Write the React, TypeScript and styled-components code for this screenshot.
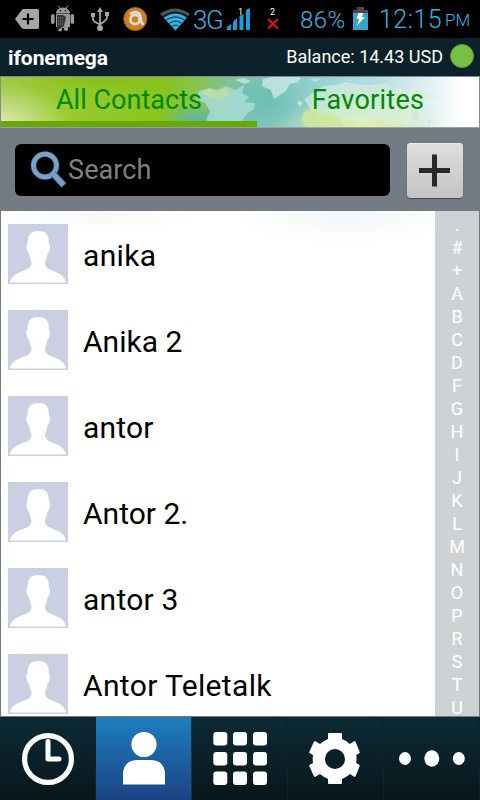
import React from "react";
import styled, { createGlobalStyle } from "styled-components";

const GlobalStyle = createGlobalStyle`
  * { box-sizing: border-box; }
  body { margin: 0; background: #000; }
`;

const Screen = styled.main`
  width: 480px;
  height: 800px;
  display: flex;
  flex-direction: column;
  overflow: hidden;
  font-family: Roboto, "Liberation Sans", sans-serif;
  background: #0b1f27;
`;

const StatusBar = styled.header`
  height: 38px;
  flex: none;
  display: flex;
  background: #000;
  color: #38b2e2;
`;

const Slot = styled.div<{ $gap: number; $w: number }>`
  flex: none;
  margin-left: ${(p) => p.$gap}px;
  width: ${(p) => p.$w}px;
  height: 38px;
  svg { display: block; }
`;

const StatusText = styled.span<{ $size: number; $track?: number }>`
  display: block;
  font-size: ${(p) => p.$size}px;
  letter-spacing: ${(p) => p.$track ?? 0}px;
  line-height: 40px;
  white-space: nowrap;
  font-weight: 300;
`;

const TitleBar = styled.div`
  height: 38px;
  flex: none;
  display: flex;
  align-items: center;
  justify-content: space-between;
  padding: 0 6px 2px 8px;
  background: #0c2129;
  color: #fff;
`;

const Account = styled.strong`
  font-size: 21px;
  letter-spacing: -0.1px;
  font-weight: 700;
  padding-top: 3px;
`;

const Balance = styled.div`
  display: flex;
  align-items: center;
  gap: 7px;
  font-size: 18px;
  letter-spacing: 0;
  white-space: nowrap;
`;

const Online = styled.i`
  width: 24px;
  height: 24px;
  border-radius: 50%;
  background: #76c043;
  border: 1px solid #5a9b38;
`;

const Tabs = styled.nav`
  height: 52px;
  flex: none;
  position: relative;
  display: flex;
  overflow: hidden;
  border: 1px solid #858b8c;
  border-bottom-color: #9aa09c;
`;

const TabArt = styled.svg`
  position: absolute;
  inset: 0;
`;

const Tab = styled.div<{ $active?: boolean }>`
  position: relative;
  width: ${(p) => (p.$active ? 256 : 222)}px;
  height: 50px;
  border-bottom: ${(p) => (p.$active ? "6px solid #66a900" : "0")};
  text-align: center;
  font-size: 27px;
  line-height: 46px;
  letter-spacing: ${(p) => (p.$active ? 0.03 : 0.25)}px;
  color: #008a00;
  white-space: nowrap;
`;

const SearchRow = styled.div`
  height: 83px;
  flex: none;
  display: flex;
  align-items: center;
  gap: 17px;
  padding: 1px 16px 0 15px;
  background: #737c84;
`;

const SearchBox = styled.label`
  width: 375px;
  height: 52px;
  display: flex;
  align-items: center;
  border-radius: 6px;
  padding-left: 14px;
  background: #000;
  color: #808080;
  font-size: 27px;
  letter-spacing: 0.1px;
  line-height: 54px;
`;

const AddButton = styled.button`
  width: 56px;
  height: 55px;
  padding: 0;
  border: 0;
  border-radius: 4px;
  background: linear-gradient(#dedede, #c5c4c5);
  box-shadow: 0 1px 1px #45494c, inset 0 1px #e9e9e9;
  svg { display: block; }
`;

const Body = styled.section`
  height: 506px;
  flex: none;
  display: flex;
  overflow: hidden;
  border: solid #74797b;
  border-width: 0 1px 1px;
  background:
    radial-gradient(ellipse 120px 34px at 345px 0, #f2f6f6, transparent),
    radial-gradient(ellipse 100px 24px at 100px 0, #f7f7f7, transparent), #fff;
`;

const ContactList = styled.ul`
  list-style: none;
  margin: 0;
  padding: 13px 0 0 7px;
  width: 434px;
`;

const Contact = styled.li`
  height: 86px;
  display: flex;
  align-items: flex-start;
  gap: 15px;
  font-size: 30px;
  line-height: 63px;
  color: #000;
  svg { display: block; flex: none; }
`;

const ContactName = styled.span<{ $track: number }>`
  letter-spacing: ${(p) => p.$track}px;
`;

const AlphaIndex = styled.div`
  width: 44px;
  background: #cfd2d4;
  padding-top: 2px;
  color: #fff;
  font-size: 18px;
  text-align: center;
`;

const Letter = styled.div`
  height: 23px;
  line-height: 23px;
`;

const BottomNav = styled.nav`
  height: 83px;
  flex: none;
  display: grid;
  grid-template-columns: repeat(5, 96px);
`;

const NavItem = styled.button<{ $active?: boolean }>`
  height: 83px;
  padding: 0;
  border: 0;
  border-right: 1px solid ${(p) => (p.$active ? "#123451" : "#0d242d")};
  background: ${(p) => (p.$active ? "linear-gradient(#1d7bbd 5%, #1b4384)" : "linear-gradient(#0d2a34, #09161c)")};
  svg { display: block; }
`;

const Avatar = () => (
  <svg width="60" height="60" viewBox="0 0 60 60">
    <path fill="#cad0e2" d="M0 0h60v60H0z" />
    <path fill="#fff" d="M30.300 7C22 7 19.500 11.500 19.500 20c-1.300 0-1.300 3-.7 5.500.5 2.500 1.400 3.500 2.400 4.500.4 4 1.300 6 2.300 8 .3 3-1 5-3 6.500C17 47.500 3.500 48.500 2 58.500h56C56.500 48.500 43.500 47.500 40 44.500c-2-1.500-3.300-3.500-3-6.500 1-2 1.900-4 2.300-8 1-1 1.900-2 2.400-4.500.6-2.500.6-5.500-.7-5.500C41 11.500 38.600 7 30.300 7z" />
  </svg>
);

const PlusTag = () => (
  <svg width="25" height="38" viewBox="0 0 25 38">
    <path fill="#a6a6a6" d="M9 9h13q2 0 2 2v16q0 2-2 2H9q-2 0-3-2L0 19l6-8q1-2 3-2z" />
    <path d="M13 13.500v11M7.500 19h11" stroke="#000" strokeWidth="2.200" />
  </svg>
);

const Android = () => (
  <svg width="24" height="38" viewBox="0 0 24 38" fill="#999">
    <path d="M5.500 13C6 9.500 8.500 8 12 8s6 1.500 6.500 5zM7 5.500l2 3M17 5.500l-2 3" stroke="#999" strokeWidth="1" />
    <rect x="0" y="14" width="3.600" height="10" rx="1.800" />
    <rect x="19.500" y="14" width="3.600" height="10" rx="1.800" />
    <path d="M5 14h14v13h-2v3q-2 2-4 0v-2h-2v2q-2 3-4 0v-3H5z" />
    <path d="M6 15h6l3 2-2 9-6 4-1-5z" fill="#343434" />
    <path d="M7 18h6M7 21h6M7 24h6" stroke="#8c8c8c" strokeDasharray="1 1" />
    <circle cx="9.500" cy="10.800" r=".8" fill="#000" />
    <circle cx="14.500" cy="10.800" r=".8" fill="#000" />
  </svg>
);

const Usb = () => (
  <svg width="18" height="38" viewBox="0 0 18 38" fill="none" stroke="#a5a5a5" strokeWidth="1.800">
    <path d="M9 28V10M2 15v4q0 2 3 3.500l4 2 4-3q3-2 3-4v-3" />
    <path d="M6 12l3-5 3 5zM0 13h4v4H0zM14 12h4v4h-4z" fill="#a5a5a5" stroke="none" />
    <circle cx="9" cy="28" r="3" fill="#a5a5a5" stroke="none" />
  </svg>
);

const Avast = () => (
  <svg width="25" height="38" viewBox="0 0 25 38">
    <circle cx="12.300" cy="19" r="11.500" fill="#cf811e" stroke="#9b651f" strokeWidth="1" />
    <path d="M8 13.500q4.500-2.800 8 0 1.800 1.500 1.800 5 0 4 2 5.500" fill="none" stroke="#ddd" strokeWidth="2.600" strokeLinecap="round" />
    <circle cx="12" cy="19.500" r="4.600" fill="none" stroke="#ddd" strokeWidth="2.600" />
  </svg>
);

const Wifi = () => (
  <svg width="31" height="38" viewBox="0 0 31 38">
    <path d="M0 14Q15 3 30 14L15.500 30z" fill="#4e5558" />
    <path d="M4 18q11.500-8.500 22.500 0l-11 12.500z" fill="#35b5e6" />
    <path d="M2.500 17q13-9 25.500 0" fill="none" stroke="#071318" strokeWidth="1.400" />
    <path d="M6 20q9.500-6 18.500 0M9.500 23.200q6-4 12 0M12.500 26.300q3-2.500 6 0" fill="none" stroke="#174e66" strokeWidth="1.300" />
  </svg>
);

const Signal = () => (
  <svg width="25" height="38" viewBox="0 0 25 38">
    <path fill="#169fdf" d="M0 27l4-3v6H0zM6 22l4-4v12H6zM12.500 16l4-2v16h-4zM19 10l4-2v22h-4z" />
    <text x="11" y="15" fill="#fff" fontSize="9">1</text>
  </svg>
);

const NoSim = () => (
  <svg width="18" height="38" viewBox="0 0 18 38">
    <text x="5" y="15" fill="#fff" fontSize="9">2</text>
    <path d="M3 19l10 9.500M13 19L3 28.500" stroke="#d51418" strokeWidth="2.200" />
  </svg>
);

const Battery = () => (
  <svg width="16" height="38" viewBox="0 0 16 38">
    <path fill="#4a4a4a" d="M4 7h7v3h4v4H0v-4h4z" />
    <path fill="#3aa3cd" d="M0 13h15v17H0z" />
    <path fill="#fff" d="M5.500 13h5L8.800 17H12L4 25.500 6.200 19H3.500z" />
  </svg>
);

const Magnifier = () => (
  <svg width="39" height="40" viewBox="0 0 39 40" fill="none">
    <circle cx="16" cy="15.500" r="11.500" stroke="#47667f" strokeWidth="5.600" />
    <circle cx="16" cy="15.500" r="11.500" stroke="#76a3cb" strokeWidth="4.300" />
    <path d="M24 23.500l11 12" stroke="#47667f" strokeWidth="7" />
    <path d="M23.500 23l11 12" stroke="#76a3cb" strokeWidth="5" />
  </svg>
);

const WorldArt = () => (
  <TabArt width="478" height="50" viewBox="1 77 478 50" preserveAspectRatio="none">
    <defs>
      <linearGradient id="sky">
        <stop offset="0" stopColor="#a4cc50" />
        <stop offset=".12" stopColor="#9acb31" />
        <stop offset=".34" stopColor="#89c41c" />
        <stop offset=".43" stopColor="#86c365" />
        <stop offset=".5" stopColor="#79c3ae" />
        <stop offset=".65" stopColor="#91d0d1" />
        <stop offset=".8" stopColor="#b9dfe4" />
        <stop offset=".91" stopColor="#e8f4f5" />
        <stop offset=".96" stopColor="#fff" />
      </linearGradient>
      <radialGradient id="glow">
        <stop stopColor="#e7f4a0" />
        <stop offset="1" stopColor="#dff0a0" stopOpacity="0" />
      </radialGradient>
      <radialGradient id="pale">
        <stop stopColor="#e7efc9" />
        <stop offset="1" stopColor="#d4e59a" stopOpacity="0" />
      </radialGradient>
      <radialGradient id="teal">
        <stop stopColor="#57b6ad" />
        <stop offset="1" stopColor="#57b6ad" stopOpacity="0" />
      </radialGradient>
      <radialGradient id="shade">
        <stop stopColor="#65a90a" stopOpacity=".35" />
        <stop offset="1" stopColor="#8fc319" stopOpacity="0" />
      </radialGradient>
    </defs>
    <path d="M0 76h480v52H0z" fill="url(#sky)" />
    <ellipse cx="90" cy="76" rx="130" ry="30" fill="url(#shade)" />
    <ellipse cx="0" cy="128" rx="75" ry="45" fill="url(#pale)" />
    <ellipse cx="198" cy="121" rx="40" ry="18" fill="url(#teal)" />
    <ellipse cx="270" cy="100" rx="42" ry="32" fill="url(#teal)" opacity=".5" />
    <ellipse cx="360" cy="128" rx="85" ry="32" fill="url(#glow)" />
    <path d="M199 91l10-3 8 2 9-4 9 4 9-5-2 8 7 4-5 5 11 1-1 6-6 4-6 7-8 6-28 1 1-9 3-7-5-8-9-4z" fill="#a9dcd7" opacity=".85" />
    <path d="M201 92l8-3 9 2 9-3 3 7-10 4-10-1z" fill="#c4df99" opacity=".7" />
    <path d="M263 79l10-2h28l-3 5-8 2-4 7-12 8-3-9-9-4z" fill="#d5eee9" opacity=".7" />
    <path d="M304 99l9-6 10-7 13-1 8-3 20 3 22-1 10 4 26 2 16 7-10 4-4 7-9-2-4 7 5 5-8 8-11-3-8 2-15-6-10 6-12-4-12 3-6-6-12 1-10-8z" fill="#ddf0d9" opacity=".6" />
    <path d="M304 112l8-5 12 6 14 3 7 12h-38l-6-9z" fill="#cfe79c" opacity=".8" />
    <path d="M235 80l8-2 8 3-6 3zM299 100l4 3-3 4-3-4zM310 79l10-1-4 4zM346 79l7 1-5 2zM411 112l5-3 4 8-6 4zM427 119l6 2-5 4z" fill="#caead2" opacity=".8" />
  </TabArt>
);

const ClockIcon = () => (
  <svg width="95" height="83" viewBox="0 0 95 83" fill="none" stroke="#fff">
    <circle cx="48" cy="42" r="23.400" strokeWidth="5.200" />
    <path d="M48 24.500V42h11" strokeWidth="5" strokeLinecap="round" strokeLinejoin="round" />
  </svg>
);

const PersonIcon = () => (
  <svg width="95" height="83" viewBox="0 0 95 83" fill="#fff">
    <circle cx="48" cy="27.500" r="12.600" />
    <path d="M27 67.500V58q0-15 15-15h12q15 0 15 15v9.500z" />
  </svg>
);

const KeypadIcon = () => (
  <svg width="95" height="83" viewBox="0 0 95 83" fill="#fff">
    {[15, 35, 54.5].flatMap((y) =>
      [21.3, 41, 61].map((x) => <rect key={`${x}-${y}`} x={x} y={y} width="14" height="13.500" rx="3" />)
    )}
  </svg>
);

const GearIcon = () => (
  <svg width="95" height="83" viewBox="0 0 95 83">
    <path
      fill="#fff"
      fillRule="evenodd"
      d="M40 17q0-1 1-1h12q1 0 1 1v5q4 1.500 8 5l4-2.700q1-.4 1.600.5l4 10q.4 1-.4 1.500l-3 1.700q.6 4 0 8l3 1.700q.8.500.4 1.500l-4 10q-.6.900-1.600.5L62 57q-4 3.500-8 5v4q0 1-1 1H41q-1 0-1-1v-4q-4-1.500-8-5l-4.500 2.700q-1 .4-1.600-.5l-4.500-10q-.5-1 .4-1.500L25 46q-.6-4 0-8l-3.200-1.700q-.9-.5-.4-1.500l4.500-10q.6-.9 1.600-.5L32 27q4-3.500 8-5zM47 32a10 10 0 1 0 0 20 10 10 0 0 0 0-20z"
    />
  </svg>
);

const MoreIcon = () => (
  <svg width="95" height="83" viewBox="0 0 95 83" fill="#fff">
    <ellipse cx="21" cy="41.500" rx="6" ry="6.500" />
    <ellipse cx="47.800" cy="41.500" rx="7.500" ry="8.300" />
    <ellipse cx="74.800" cy="41.500" rx="6" ry="6.500" />
  </svg>
);

const contacts = [
  { name: "anika", track: 0.35 },
  { name: "Anika 2", track: 0 },
  { name: "antor", track: 0.2 },
  { name: "Antor 2.", track: 0 },
  { name: "antor 3", track: 0.25 },
  { name: "Antor Teletalk", track: 0.35 },
];

const letters = ".#+ABCDFGHIJKLMNOPRSTU".split("");

export default function App() {
  return (
    <Screen>
      <GlobalStyle />
      <StatusBar>
        <Slot $gap={15} $w={25}><PlusTag /></Slot>
        <Slot $gap={11} $w={24}><Android /></Slot>
        <Slot $gap={16} $w={18}><Usb /></Slot>
        <Slot $gap={14} $w={25}><Avast /></Slot>
        <Slot $gap={12} $w={31}><Wifi /></Slot>
        <Slot $gap={2} $w={30}><StatusText $size={26} $track={-1.4}>3G</StatusText></Slot>
        <Slot $gap={4} $w={25}><Signal /></Slot>
        <Slot $gap={13} $w={18}><NoSim /></Slot>
        <Slot $gap={17} $w={48}><StatusText $size={24} $track={0.4}>86%</StatusText></Slot>
        <Slot $gap={5} $w={16}><Battery /></Slot>
        <Slot $gap={10} $w={65}><StatusText $size={25} $track={0.5}>12:15</StatusText></Slot>
        <Slot $gap={1} $w={30}><StatusText $size={17}>PM</StatusText></Slot>
      </StatusBar>
      <TitleBar>
        <Account>ifonemega</Account>
        <Balance>Balance: 14.43 USD <Online /></Balance>
      </TitleBar>
      <Tabs>
        <WorldArt />
        <Tab $active>All Contacts</Tab>
        <Tab>Favorites</Tab>
      </Tabs>
      <SearchRow>
        <SearchBox><Magnifier />Search</SearchBox>
        <AddButton aria-label="Add contact">
          <svg width="56" height="55" viewBox="0 0 56 55">
            <path d="M12 27.500h31M27.500 11.500v32" stroke="#282828" strokeWidth="5" />
          </svg>
        </AddButton>
      </SearchRow>
      <Body>
        <ContactList>
          {contacts.map((c) => (
            <Contact key={c.name}>
              <Avatar />
              <ContactName $track={c.track}>{c.name}</ContactName>
            </Contact>
          ))}
        </ContactList>
        <AlphaIndex>
          {letters.map((l) => <Letter key={l}>{l}</Letter>)}
        </AlphaIndex>
      </Body>
      <BottomNav>
        <NavItem aria-label="Recent"><ClockIcon /></NavItem>
        <NavItem aria-label="Contacts" $active><PersonIcon /></NavItem>
        <NavItem aria-label="Keypad"><KeypadIcon /></NavItem>
        <NavItem aria-label="Settings"><GearIcon /></NavItem>
        <NavItem aria-label="More"><MoreIcon /></NavItem>
      </BottomNav>
    </Screen>
  );
}
